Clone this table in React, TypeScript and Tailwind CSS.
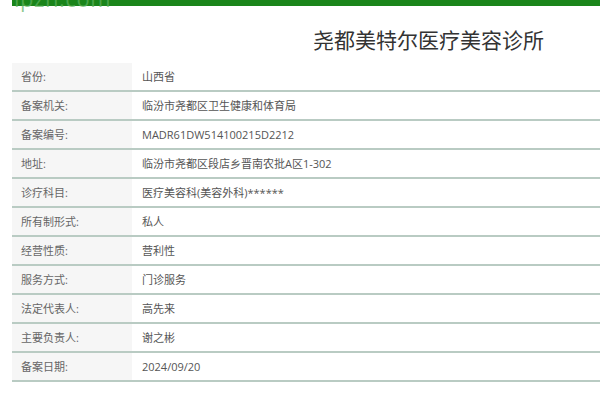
// 诊所备案信息卡：顶部绿条 + 标题 + 两列信息表
const ROWS: [string, string][] = [
  ["省份:", "山西省"],
  ["备案机关:", "临汾市尧都区卫生健康和体育局"],
  ["备案编号:", "MADR61DW514100215D2212"],
  ["地址:", "临汾市尧都区段店乡晋南农批A区1-302"],
  ["诊疗科目:", "医疗美容科(美容外科)******"],
  ["所有制形式:", "私人"],
  ["经营性质:", "营利性"],
  ["服务方式:", "门诊服务"],
  ["法定代表人:", "高先来"],
  ["主要负责人:", "谢之彬"],
  ["备案日期:", "2024/09/20"],
];

export default function App() {
  return (
    <div
      className="h-[400px] w-[600px] overflow-hidden bg-white pl-3"
      style={{ fontFamily: '"Open Sans", "Noto Sans CJK SC", sans-serif' }}
    >
      {/* 顶部绿条，带半透明水印 */}
      <div className="relative h-[6px] bg-[#1a851a]">
        <span className="absolute -top-[13px] left-[2px] text-[22px] leading-none tracking-wide text-[#5fb35f]/70">
          ipzn.com
        </span>
      </div>

      <h1 className="pl-[301px] pt-[20px] text-[21px] leading-[28px] text-[#333]">
        尧都美特尔医疗美容诊所
      </h1>

      <div className="mt-[9px]">
        {ROWS.map(([k, v]) => (
          <div
            key={k}
            className="flex h-[29px] border-b-2 border-[#b9cbc3] text-[11px] leading-[27px]"
          >
            <div className="w-[120px] shrink-0 bg-[#f6f6f6] pl-[9px] text-[#666]">
              {k}
            </div>
            <div className="pl-[10px] text-[#555]">{v}</div>
          </div>
        ))}
      </div>
    </div>
  );
}
